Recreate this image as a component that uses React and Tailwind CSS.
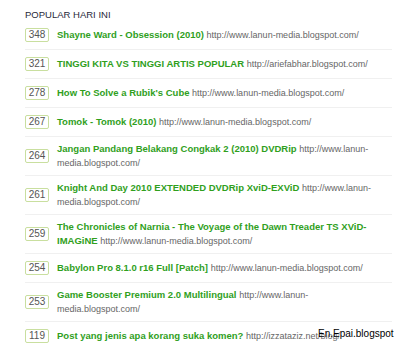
import React from "react";

const posts = [
  { count: 348, title: "Shayne Ward - Obsession (2010)", url: "http://www.lanun-media.blogspot.com/" },
  { count: 321, title: "TINGGI KITA VS TINGGI ARTIS POPULAR", url: "http://ariefabhar.blogspot.com/" },
  { count: 278, title: "How To Solve a Rubik's Cube", url: "http://www.lanun-media.blogspot.com/" },
  { count: 267, title: "Tomok - Tomok (2010)", url: "http://www.lanun-media.blogspot.com/" },
  { count: 264, title: "Jangan Pandang Belakang Congkak 2 (2010) DVDRip", url: "http://www.lanun-media.blogspot.com/" },
  { count: 261, title: "Knight And Day 2010 EXTENDED DVDRip XviD-EXViD", url: "http://www.lanun-media.blogspot.com/" },
  { count: 259, title: "The Chronicles of Narnia - The Voyage of the Dawn Treader TS XViD-IMAGiNE", url: "http://www.lanun-media.blogspot.com/", tall: true },
  { count: 254, title: "Babylon Pro 8.1.0 r16 Full [Patch]", url: "http://www.lanun-media.blogspot.com/" },
  { count: 253, title: "Game Booster Premium 2.0 Multilingual", url: "http://www.lanun-media.blogspot.com/" },
  { count: 119, title: "Post yang jenis apa korang suka komen?", url: "http://izzataziz.net/blog/" },
];

const App = () => {
  return (
    <div className="relative w-[400px] h-[349px] bg-white overflow-hidden font-['Liberation_Sans',Arial,sans-serif]">
      <div className="pl-[25px] pr-[8px] pt-[9px]">
        {/* Heading */}
        <h2 className="text-[9.5px] leading-[12px] text-[#27283a]">POPULAR HARI INI</h2>

        {/* Popular posts list */}
        <ul>
          {posts.map((post) => (
            <li
              key={post.count}
              className="flex items-center border-b border-[#f0f0f0] min-h-[29px] py-[5px]"
            >
              <span className="shrink-0 w-[24px] h-[14px] mr-[8px] flex items-center justify-center border border-[#c9df9f] rounded-[2px] text-[10px] text-[#555] leading-none">
                {post.count}
              </span>
              <p
                className={
                  "pr-[6px] text-[9.5px] " +
                  (post.tall ? "leading-[14px]" : "leading-[13px]")
                }
              >
                <a className="font-bold text-[#30a01d]">{post.title}</a>{" "}
                <span className="text-[9px] text-[#666]">{post.url}</span>
              </p>
            </li>
          ))}
        </ul>
      </div>

      {/* Watermark */}
      <span className="absolute left-[318px] top-[326px] text-[10px] text-black [text-shadow:0_0_2px_#fff]">
        En.Epai.blogspot
      </span>
    </div>
  );
};

export default App;
